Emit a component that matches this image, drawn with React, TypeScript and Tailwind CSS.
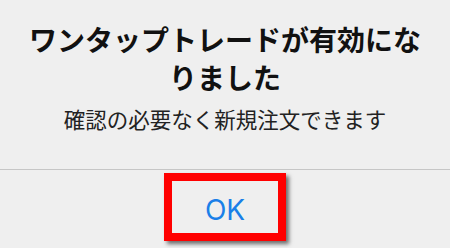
export default function App() {
  return (
    <div className="flex h-[248px] w-[450px] flex-col overflow-hidden bg-[#efefef] font-['Noto_Sans_CJK_JP',sans-serif]">
      <div className="flex h-[169px] flex-col items-center px-[20px] pt-[20px] text-center">
        <h1 className="text-[28px] font-bold leading-[38px] text-[#111111]">
          ワンタップトレードが有効にな
          <br />
          りました
        </h1>
        <p className="mt-[10px] text-[21.5px] leading-[26px] text-[#222222]">確認の必要なく新規注文できます</p>
      </div>
      <div className="h-px bg-[#c6c6c6]" />
      <div className="flex flex-1 justify-center pt-[3px]">
        <button className="flex h-[68px] w-[122px] items-center justify-center border-[8px] border-[#ff0000] pt-[6px] shadow-[3px_3px_4px_rgba(0,0,0,0.55)]">
          <span className="font-['Inter',sans-serif] text-[28px] leading-none text-[#1a7fe8]">OK</span>
        </button>
      </div>
    </div>
  );
}
